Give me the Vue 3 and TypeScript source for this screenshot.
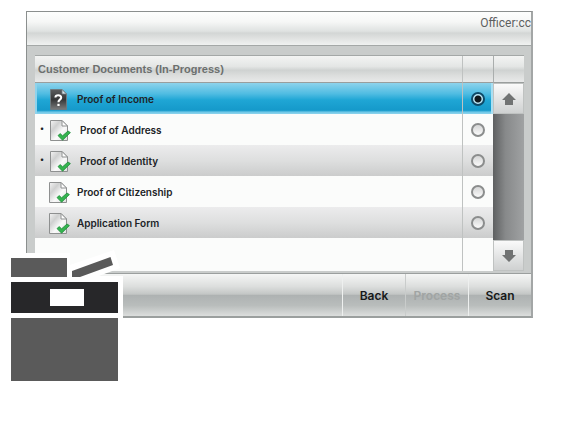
<script setup lang="ts">
import { ref } from 'vue'

interface DocumentItem {
  id: string
  name: string
  pending: boolean
  scanned: boolean
}

const documents: DocumentItem[] = [
  { id: 'income', name: 'Proof of Income', pending: false, scanned: false },
  { id: 'address', name: 'Proof of Address', pending: true, scanned: true },
  { id: 'identity', name: 'Proof of Identity', pending: true, scanned: true },
  { id: 'citizenship', name: 'Proof of Citizenship', pending: false, scanned: true },
  { id: 'application', name: 'Application Form', pending: false, scanned: true },
]

const selected = ref('income')
</script>

<template>
  <main class="page">
    <section class="panel">
      <header class="top">Officer:cc</header>

      <div class="content">
        <div class="list">
          <table class="documents">
            <colgroup>
              <col />
              <col class="pick-col" />
            </colgroup>
            <thead>
              <tr>
                <th>Customer Documents (In-Progress)</th>
                <th></th>
              </tr>
            </thead>
            <tbody>
              <tr v-for="doc in documents" :key="doc.id" :class="{ selected: selected === doc.id }">
                <td>
                  <label class="doc" :class="{ pending: doc.pending }" :for="doc.id">
                    <span class="mark">{{ doc.pending ? '•' : '' }}</span>
                    <svg v-if="doc.scanned" class="icon" width="22" height="24" viewBox="0 0 22 24">
                      <defs>
                        <linearGradient :id="'paper-' + doc.id" x1="0" y1="0" x2="1" y2="1">
                          <stop offset="0" stop-color="#f4f4f4" />
                          <stop offset="0.3" stop-color="#cfd0d0" />
                          <stop offset="0.6" stop-color="#fafafa" />
                          <stop offset="1" stop-color="#dedfdf" />
                        </linearGradient>
                      </defs>
                      <path d="M1.5 2.5H13L18.5 8V22.5H1.5Z" :fill="`url(#paper-${doc.id})`" stroke="#8e9090" />
                      <path d="M13 2.5V8H18.5Z" fill="#fff" stroke="#8e9090" />
                      <path d="M9 17.6L11.2 15.6L13.6 17.8L19 13L21.4 14.6L13.6 22.2Z" fill="#35b44f" stroke="#1e8a3a" stroke-width="0.8" stroke-linejoin="round" />
                    </svg>
                    <svg v-else class="icon" width="22" height="24" viewBox="0 0 22 24">
                      <defs>
                        <linearGradient id="dark-paper" x1="0" y1="0" x2="0" y2="1">
                          <stop offset="0" stop-color="#5c5d5e" />
                          <stop offset="0.5" stop-color="#353637" />
                          <stop offset="1" stop-color="#7b7c7d" />
                        </linearGradient>
                      </defs>
                      <path d="M2.5 2.5H14L18.5 7V22.5H2.5Z" fill="url(#dark-paper)" stroke="#6d7a80" />
                      <path d="M14 2.5V7H18.5Z" fill="#d9e4e8" stroke="#6d7a80" stroke-width="0.8" />
                      <path d="M7.4 10.5C7.5 7.4 13.4 7.5 13.2 10.6C13.1 12.7 10.4 12.6 10.4 15.2" fill="none" stroke="#fff" stroke-width="2" />
                      <rect x="9.4" y="16.8" width="2.2" height="2.2" fill="#fff" />
                    </svg>
                    <span>{{ doc.name }}</span>
                  </label>
                </td>
                <td class="pick">
                  <input :id="doc.id" v-model="selected" type="radio" name="document" :value="doc.id" />
                </td>
              </tr>
              <tr>
                <td></td>
                <td></td>
              </tr>
            </tbody>
          </table>

          <div class="scroll">
            <div class="scroll-head"></div>
            <button type="button" class="step" aria-label="Scroll up">
              <svg width="14" height="12" viewBox="0 0 14 12"><path d="M7 0L14 7H11V12H3V7H0Z" fill="#717373" /></svg>
            </button>
            <div class="track"></div>
            <button type="button" class="step" aria-label="Scroll down">
              <svg width="14" height="12" viewBox="0 0 14 12"><path d="M7 12L14 5H11V0H3V5H0Z" fill="#717373" /></svg>
            </button>
          </div>
        </div>
      </div>

      <footer class="actions">
        <button type="button">Back</button>
        <button type="button" disabled>Process</button>
        <button type="button">Scan</button>
      </footer>
    </section>

    <svg class="device" width="124" height="136" viewBox="0 0 124 136" aria-hidden="true">
      <path d="M0 0H65V12L109 -3L115 15L94 23H118V136H0Z" fill="#fff" />
      <rect x="6" y="5" width="56" height="19" fill="#5a5a5a" />
      <path d="M67 18L105.5 4L108 12L75 24H67Z" fill="#5a5a5a" />
      <rect x="6" y="29" width="107" height="31" fill="#272729" />
      <rect x="45" y="36" width="34" height="17" fill="#fff" />
      <rect x="6" y="65" width="107" height="63" fill="#5a5a5a" />
    </svg>
  </main>
</template>

<style>
body {
  background: #fff;
}
</style>

<style scoped>
.page {
  position: relative;
  box-sizing: border-box;
  min-height: 100vh;
  padding: 11px 40px 40px 26px;
  font-family: Inter, "Liberation Sans", sans-serif;
  font-size: 10px;
  color: #202326;
}

.panel {
  border: 1px solid #8b8f8e;
  border-right: 2px solid #a3a6a6;
  border-bottom: 2px solid #9b9f9e;
  background: #c9cccb;
}

.top {
  height: 34px;
  box-sizing: border-box;
  padding-top: 3px;
  border-bottom: 1px solid #a4a8a7;
  background: linear-gradient(#fdfefd 0%, #f6f7f6 30%, #dfe2e1 58%, #d3d6d5 64%, #e4e6e5 85%, #f0f2f1 100%);
  font-family: Roboto, sans-serif;
  font-size: 12px;
  line-height: 16px;
  text-align: right;
  color: #5d6060;
}

.content {
  padding: 9px 7px 2px 8px;
}

.list {
  display: grid;
  grid-template-columns: 1fr 31px;
  border-top: 1px solid #a4a8a7;
}

.documents {
  width: 100%;
  border-collapse: separate;
  border-spacing: 0;
  table-layout: fixed;
}

.pick-col {
  width: 31px;
}

th,
td {
  box-sizing: border-box;
  padding: 0;
}

th,
.scroll-head {
  height: 27px;
  box-sizing: border-box;
  border-bottom: 1px solid #9a9e9d;
  background: linear-gradient(#f3f4f3 0%, #e4e6e5 40%, #cfd2d1 55%, #dcdedd 75%, #e8e9e9 100%);
}

th {
  padding-left: 3px;
  text-align: left;
  font-family: "Liberation Sans", sans-serif;
  font-size: 11px;
  font-weight: 700;
  color: #6c6f6e;
}

th + th,
td + td {
  border-left: 1px solid #bfc2c1;
}

td {
  height: 31px;
  background: #fbfcfb;
}

tbody tr:nth-child(odd) td {
  background: linear-gradient(#ececed 0%, #dedfdf 50%, #cbcccc 100%);
}

tbody tr.selected td {
  background: linear-gradient(#8ed3ec 0%, #4fbce2 35%, #1fa6d5 55%, #1599ca 88%, #6fc8e8 94%, #8ed3ec 100%);
}

tbody tr.selected td:first-child {
  box-shadow: inset 2px 0 #8ed3ec;
}

tbody tr.selected td:last-child {
  box-shadow: inset -2px 0 #a9dff2;
}

tbody tr:nth-child(even):not(.selected) td {
  background: #fbfcfb;
}

tbody tr:last-child td {
  height: 33px;
}

.doc {
  display: grid;
  grid-template-columns: 13px 29px auto;
  align-items: center;
  height: 31px;
  font-weight: 600;
}

.doc.pending {
  grid-template-columns: 14px 31px auto;
}

.mark {
  padding-left: 5px;
  font-size: 8px;
  line-height: 10px;
  padding-bottom: 4px;
}

.icon {
  display: block;
}

.pick input {
  appearance: none;
  box-sizing: border-box;
  display: block;
  width: 14px;
  height: 14px;
  margin: 0 auto;
  border: 2px solid #8b8d8d;
  border-radius: 50%;
  background: linear-gradient(#d5d6d6, #fafafa);
}

.pick input:checked {
  border-color: #0e4a68;
  background: radial-gradient(circle, #10181c 0 3px, #bfe8f6 4px);
}

.scroll {
  display: flex;
  flex-direction: column;
}

.scroll-head {
  border-left: 1px solid #aaaead;
}

.step {
  display: flex;
  align-items: center;
  justify-content: center;
  height: 31px;
  padding: 0;
  border: 1px solid #bfc2c1;
  background: linear-gradient(#fafafa, #e4e5e5 50%, #cfd1d1);
}

.track {
  flex: 1;
  background: linear-gradient(90deg, #5e6061, #87898a 40%, #a0a2a3);
}

.actions {
  display: grid;
  grid-template-columns: 1fr 63px 63px 63px;
  border-top: 1px solid #9b9f9e;
  background: linear-gradient(#f5f6f5 0%, #dcdedd 30%, #c3c6c5 48%, #aeb2b2 51%, #b9bdbc 75%, #dcdedd 100%);
}

.actions button {
  height: 42px;
  padding: 0;
  border: 0;
  border-left: 1px solid #eef0ef;
  background: none;
  font-family: Inter, sans-serif;
  font-size: 12px;
  font-weight: 600;
  color: #17191a;
}

.actions button:first-child {
  grid-column: 2;
}

.actions button:disabled {
  border-left-color: #c9cccb;
  color: #a0a4a3;
}

.device {
  position: absolute;
  left: 5px;
  top: 253px;
  overflow: visible;
}
</style>
